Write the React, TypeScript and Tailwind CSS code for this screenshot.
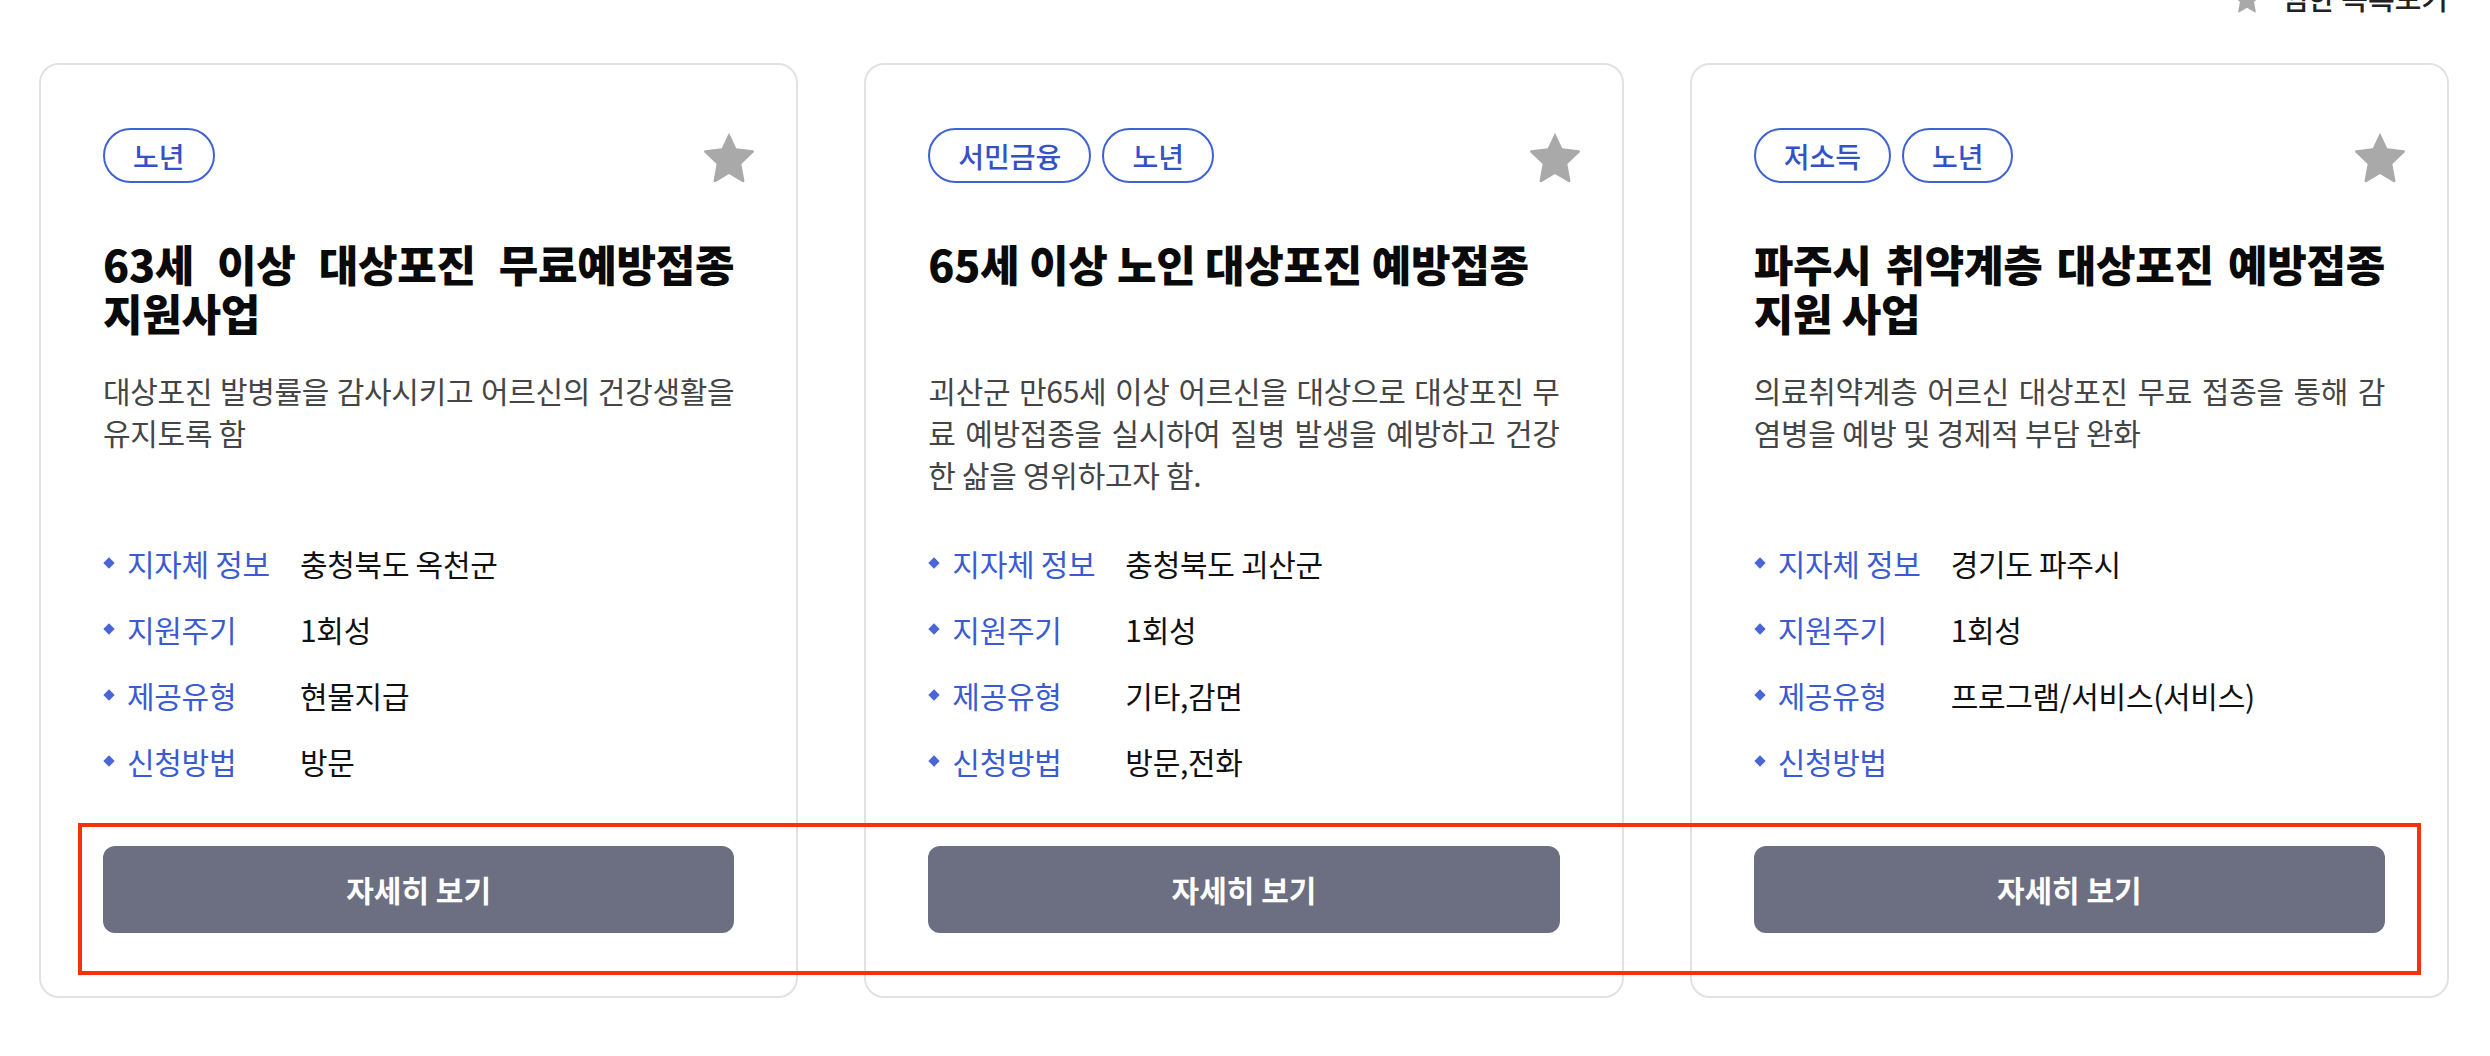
import React from "react";

type Info = { label: string; value: string };
type Policy = {
  tags: string[];
  title: string[];
  desc: string[];
  info: Info[];
};

const policies: Policy[] = [
  {
    tags: ["노년"],
    title: ["63세 이상 대상포진 무료예방접종", "지원사업"],
    desc: ["대상포진 발병률을 감사시키고 어르신의 건강생활을", "유지토록 함"],
    info: [
      { label: "지자체 정보", value: "충청북도 옥천군" },
      { label: "지원주기", value: "1회성" },
      { label: "제공유형", value: "현물지급" },
      { label: "신청방법", value: "방문" },
    ],
  },
  {
    tags: ["서민금융", "노년"],
    title: ["65세 이상 노인 대상포진 예방접종"],
    desc: [
      "괴산군 만65세 이상 어르신을 대상으로 대상포진 무",
      "료 예방접종을 실시하여 질병 발생을 예방하고 건강",
      "한 삶을 영위하고자 함.",
    ],
    info: [
      { label: "지자체 정보", value: "충청북도 괴산군" },
      { label: "지원주기", value: "1회성" },
      { label: "제공유형", value: "기타,감면" },
      { label: "신청방법", value: "방문,전화" },
    ],
  },
  {
    tags: ["저소득", "노년"],
    title: ["파주시 취약계층 대상포진 예방접종", "지원 사업"],
    desc: ["의료취약계층 어르신 대상포진 무료 접종을 통해 감", "염병을 예방 및 경제적 부담 완화"],
    info: [
      { label: "지자체 정보", value: "경기도 파주시" },
      { label: "지원주기", value: "1회성" },
      { label: "제공유형", value: "프로그램/서비스(서비스)" },
      { label: "신청방법", value: "" },
    ],
  },
];

function StarIcon({ className }: { className?: string }) {
  return (
    <svg viewBox="0 0 24 24" className={className} fill="currentColor">
      <path d="M12 1.6l3.1 6.6 7.1.9c.5.1.7.7.3 1l-5.2 4.9 1.3 7.1c.1.5-.4.9-.9.6L12 19.3l-5.7 3.4c-.5.3-1-.1-.9-.6l1.3-7.1L1.5 10.1c-.4-.3-.2-.9.3-1l7.1-.9L12 1.6z" />
    </svg>
  );
}

// Lines are given as in the original so breaks match; all but the last are justified.
function Lines({ lines }: { lines: string[] }) {
  return (
    <>
      {lines.map((line, i) => (
        <span
          key={i}
          className={
            i < lines.length - 1
              ? "block whitespace-nowrap text-justify [text-align-last:justify]"
              : "block whitespace-nowrap"
          }
        >
          {line}
        </span>
      ))}
    </>
  );
}

function PolicyCard({ policy }: { policy: Policy }) {
  return (
    <div className="flex flex-col rounded-[20px] border-2 border-[#e2e2e4] bg-white px-[62px] pt-[63px] pb-[63px]">
      <div className="flex items-start justify-between">
        <div className="flex gap-[11px]">
          {policy.tags.map((t) => (
            <span
              key={t}
              className="flex h-[55px] items-center rounded-full border-2 border-[#4062d2] px-[28px] text-[28px] font-medium text-[#3352c6]"
            >
              {t}
            </span>
          ))}
        </div>
        <StarIcon className="-mr-[23px] mt-[1px] h-[56px] w-[56px] text-[#a9a9a9]" />
      </div>

      <h3 className="mt-[54px] h-[98px] text-[43px] font-extrabold leading-[49px] tracking-[-0.3px] text-[#0a0a0a]">
        <Lines lines={policy.title} />
      </h3>

      <p className="mt-[32px] h-[126px] text-[30px] leading-[42px] tracking-[-0.3px] text-[#454545]">
        <Lines lines={policy.desc} />
      </p>

      <ul className="mt-[35px] flex flex-col">
        {policy.info.map((row) => (
          <li key={row.label} className="flex h-[66px] items-center text-[30px] tracking-[-0.3px]">
            <span className="ml-[2px] h-[8px] w-[8px] rotate-45 bg-[#4a66d6]" />
            <span className="ml-[14px] w-[173px] text-[#3a5bd2]">{row.label}</span>
            <span className="text-[#111111]">{row.value}</span>
          </li>
        ))}
      </ul>

      <button className="mt-[52px] flex h-[87px] w-full items-center justify-center rounded-[12px] bg-[#6c6e81] text-[30px] font-bold text-white">
        자세히 보기
      </button>
    </div>
  );
}

export default function App() {
  return (
    <div className="relative min-h-[1056px] w-[2490px] overflow-hidden bg-white font-['Noto_Sans_CJK_KR','Noto_Sans',sans-serif]">
      <div className="-mt-[17px] flex h-[29px] items-center justify-end gap-[18px] pr-[42px]">
        <StarIcon className="h-[32px] w-[32px] text-[#a9a9a9]" />
        <span className="text-[29px] font-medium leading-[29px] text-[#222222]">찜한 목록보기</span>
      </div>

      <div className="mt-[51px] grid grid-cols-3 gap-[66px] pl-[39px] pr-[41px]">
        {policies.map((p, i) => (
          <PolicyCard key={i} policy={p} />
        ))}
      </div>

      {/* annotation box drawn over the buttons */}
      <div className="pointer-events-none absolute left-[78px] top-[823px] h-[152px] w-[2343px] border-4 border-[#f8300e]" />
    </div>
  );
}
